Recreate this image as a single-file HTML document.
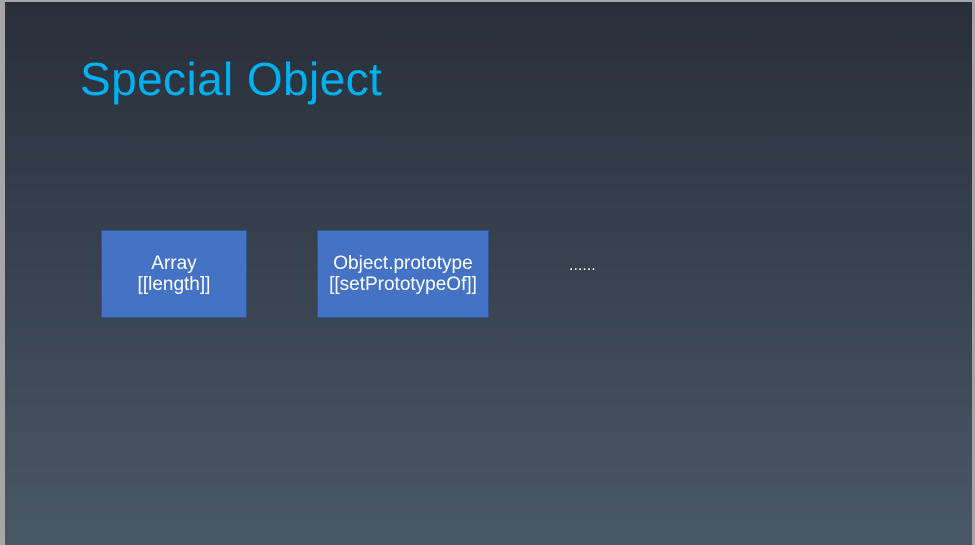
<!DOCTYPE html>
<html><head><style>
html,body{margin:0;padding:0;}
body{width:975px;height:545px;background:#a6a6a6;position:relative;overflow:hidden;font-family:"Liberation Sans","DejaVu Sans",sans-serif;}
.slide{position:absolute;left:5px;top:2px;width:967px;height:543px;background:linear-gradient(#282f3a,#4a5765);}
.t{position:absolute;left:75px;top:50px;font-size:46px;color:#00b0f0;white-space:nowrap;letter-spacing:0.4px}
.b{position:absolute;background:#4472c4;border:1px solid #2f5597;color:#fff;font-size:19px;line-height:21px;text-align:center;display:flex;align-items:center;justify-content:center;box-sizing:border-box;white-space:nowrap}
.d{position:absolute;left:564px;top:255px;color:#fff;font-size:16px}
</style></head><body>
<div class="slide">
<div class="t">Special Object</div>
<div class="b" style="left:96px;top:228px;width:146px;height:88px">Array<br>[[length]]</div>
<div class="b" style="left:312px;top:228px;width:172px;height:88px">Object.prototype<br>[[setPrototypeOf]]</div>
<div class="d">......</div>
</div>
</body></html>
